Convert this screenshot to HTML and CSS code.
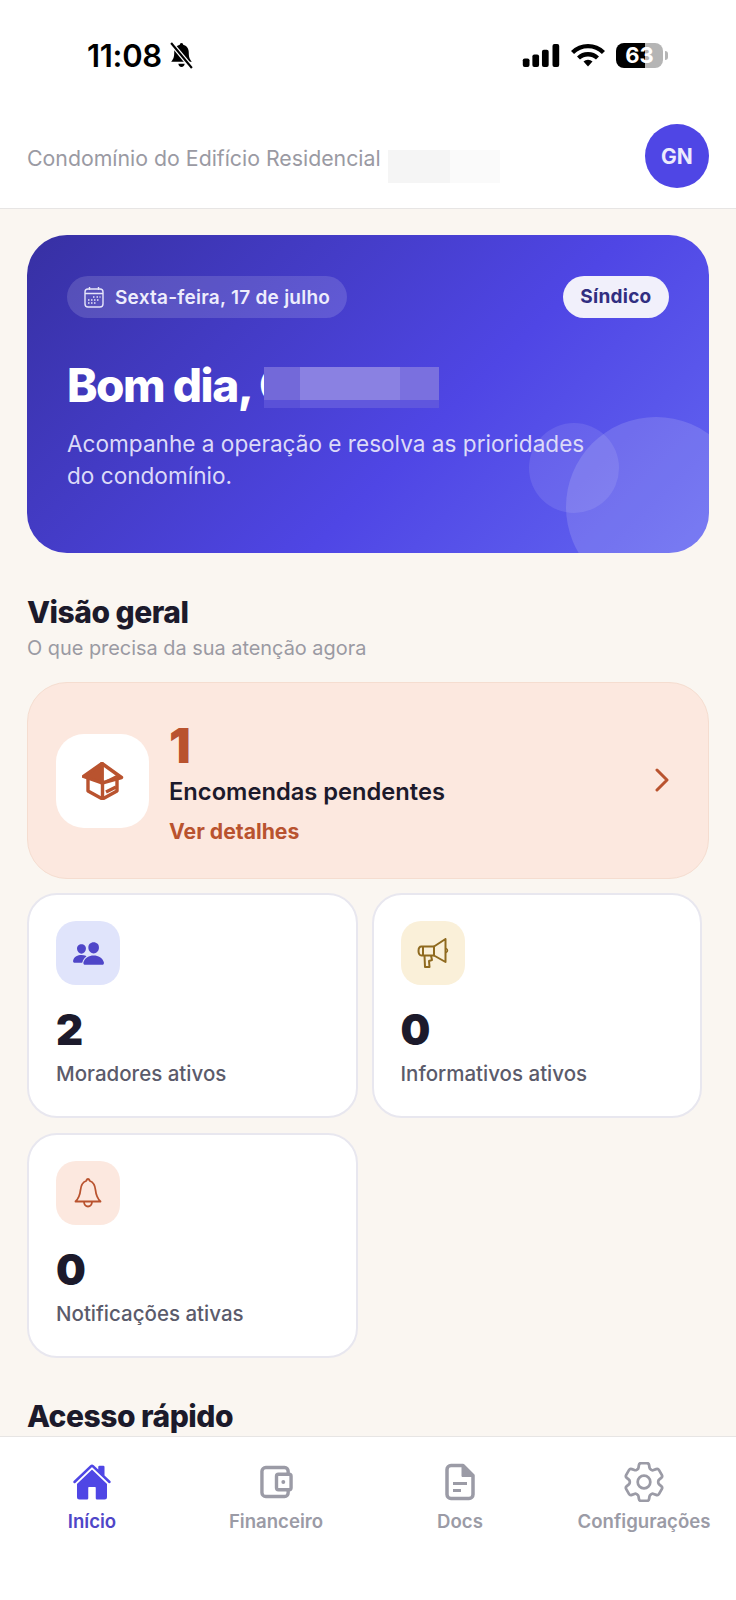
FILE: index.html
```html
<!DOCTYPE html>
<html lang="pt-BR">
<head>
    <meta charset="UTF-8">
    <meta name="viewport" content="width=device-width, initial-scale=1.0">
    <title>Condomínio</title>
    <link rel="stylesheet" href="styles.css">
</head>
<body>

    <!-- Barra de status -->
    <div class="status-bar">
        <div class="status-left">
            <span class="clock">11:08</span>
            <svg class="bell-off" viewBox="0 0 24 26">
                <path d="M12 1c1 0 1.600.8 1.600 1.700C17 3.500 19 6.300 19 10c0 5 1 6.500 3 9H2c2-2.500 3-4 3-9 0-3.700 2-6.500 5.400-7.300C10.400 1.800 11 1 12 1z" fill="#000"/>
                <path d="M9 21h6c0 1.800-1.300 3-3 3s-3-1.200-3-3z" fill="#000"/>
                <path d="M2 1l20 24" stroke="#fff" stroke-width="4.500"/>
                <path d="M2 1l20 24" stroke="#000" stroke-width="2"/>
            </svg>
        </div>
        <div class="status-right">
            <svg class="signal" viewBox="0 0 38 24" fill="#000">
                <rect x="0" y="15" width="7" height="9" rx="2"/>
                <rect x="10" y="11" width="7" height="13" rx="2"/>
                <rect x="20" y="6" width="7" height="18" rx="2"/>
                <rect x="31" y="0" width="7" height="24" rx="2"/>
            </svg>
            <svg class="wifi" viewBox="0 0 34 24" fill="none" stroke="#000" stroke-width="4.400">
                <path d="M1.500 9.500a22 22 0 0 1 31 0"/>
                <path d="M7.500 15a14 14 0 0 1 19 0"/>
                <path d="M12.500 18.500a6.500 6.500 0 0 1 9 0L17 23.500z" fill="#000" stroke="none"/>
            </svg>
            <div class="battery"><span class="battery-level">63</span></div>
            <span class="battery-tip"></span>
        </div>
    </div>

    <!-- Cabecalho -->
    <header class="top-bar">
        <span class="condo-name">Condomínio do Edifício Residencial</span>
        <span class="condo-hidden"><i></i><i></i></span>
        <div class="avatar">GN</div>
    </header>

    <main class="content">

        <section class="hero">
            <span class="circle circle-big"></span>
            <span class="circle circle-small"></span>
            <div class="hero-top">
                <div class="date-pill">
                    <svg class="calendar" viewBox="0 0 20 22" fill="none" stroke="#e6e5fa" stroke-width="1.400">
                        <rect x="1" y="3" width="18" height="18" rx="3"/>
                        <path d="M1 7.500h18M5.500 1v3M14.500 1v3"/>
                        <path d="M9 11h1.500M12.500 11H14M15.500 11h1M4 14h1.500M7 14h1.500M10 14h1.500M13 14h1.500M4 17h1.500M7 17h1.500M10 17h1.500" stroke-width="1.600"/>
                    </svg>
                    Sexta-feira, 17 de julho
                </div>
                <div class="role-pill">Síndico</div>
            </div>
            <h1 class="greeting">Bom dia, G<span class="name-hidden"><i></i><i></i><i></i><i></i></span></h1>
            <p class="hero-text">Acompanhe a operação e resolva as prioridades do condomínio.</p>
        </section>

        <h2 class="section-title overview-title">Visão geral</h2>
        <p class="section-sub">O que precisa da sua atenção agora</p>

        <!-- Destaque de encomendas -->
        <div class="highlight">
            <div class="highlight-icon">
                <svg class="box-icon" viewBox="0 0 42 38" fill="none" stroke="#b9532f" stroke-width="3.400" stroke-linejoin="round">
                    <path d="M20 1.500L1.500 14.500 20 21z" fill="#b9532f"/>
                    <path d="M20 1.500L39.500 15.500 20 21z"/>
                    <path d="M6 17v12l14.500 8L35 29V18"/>
                    <path d="M20.500 21v16M24 30l10-5"/>
                    <path d="M25 19l12-6" stroke-width="2.500"/>
                </svg>
            </div>
            <div class="highlight-text">
                <div class="highlight-number">1</div>
                <div class="highlight-title">Encomendas pendentes</div>
                <div class="highlight-link">Ver detalhes</div>
            </div>
            <svg class="chevron" viewBox="0 0 14 24" fill="none" stroke="#b9532f" stroke-width="3" stroke-linecap="round" stroke-linejoin="round">
                <path d="M2 2l10 10L2 22"/>
            </svg>
        </div>

        <div class="stats">
            <div class="stat-card">
                <div class="stat-icon icon-blue">
                    <svg class="people" viewBox="0 0 512 512" fill="#4f46c8">
                        <path d="M336 256c-20.560 0-40.440-9.180-56-25.840-15.130-16.250-24.370-37.920-26-61-1.740-24.620 5.770-47.260 21.140-63.760S312 80 336 80c23.830 0 45.380 9.060 60.700 25.520 15.470 16.620 23 39.220 21.260 63.630-1.670 23.110-10.900 44.770-26 61C376.440 246.820 356.570 256 336 256z"/>
                        <path d="M467.830 432H204.180a27.710 27.710 0 01-22-10.670 30.220 30.220 0 01-5.260-25.790c8.420-33.810 29.280-61.850 60.320-81.080C264.790 297.400 299.860 288 336 288c36.850 0 71 9 98.710 26.050 31.110 19.130 52 47.330 60.380 81.550a30.270 30.270 0 01-5.320 25.780A27.680 27.680 0 01467.830 432z"/>
                        <path d="M147 260c-35.190 0-66.130-32.720-69-72.930-1.420-20.600 5-39.650 18-53.620 12.860-13.830 31-21.450 51-21.450s38 7.660 50.930 21.570c13.100 14.080 19.500 33.090 18 53.520-2.870 40.200-33.800 72.910-68.930 72.910z"/>
                        <path d="M212.660 291.450c-17.590-8.600-40.420-12.900-65.650-12.900-29.460 0-58.070 7.680-80.570 21.620-25.510 15.830-42.670 38.880-49.600 66.710a27.390 27.390 0 005.360 23.230A25.320 25.320 0 0042.400 400h111a8 8 0 007.870-6.570c.11-.63.25-1.260.41-1.880 8.480-34.060 28.350-62.840 57.710-83.820a8 8 0 00-.63-11.820c-1.570-1.210-3.380-2.400-6.100-4.460z"/>
                    </svg>
                </div>
                <div class="stat-number">2</div>
                <div class="stat-label">Moradores ativos</div>
            </div>
            <div class="stat-card">
                <div class="stat-icon icon-yellow">
                    <svg class="megaphone" viewBox="0 0 32 30" fill="none" stroke="#8f6a1f" stroke-width="2" stroke-linejoin="round">
                        <path d="M17 8.500L28.500 1v23L17 17.500z"/>
                        <path d="M4.500 8.500H17v9H4.500c-1.800 0-3-2-3-4.500s1.200-4.500 3-4.500z"/>
                        <path d="M6 8.500v9M7.500 17.500l.5 11.500h4.500l-.5-6 3-1-1-4.500"/>
                        <path d="M29 10.500c1 .5 1.500 1.200 1.500 2s-.5 1.500-1.500 2" stroke-width="1.500"/>
                    </svg>
                </div>
                <div class="stat-number">0</div>
                <div class="stat-label">Informativos ativos</div>
            </div>
            <div class="stat-card">
                <div class="stat-icon icon-orange">
                    <svg class="bell" viewBox="0 0 28 30" fill="none" stroke="#b9532f" stroke-width="1.800" stroke-linejoin="round">
                        <path d="M14 1c1 0 1.500 1 2 2 4 1.500 5 4.500 5.500 9 .4 4 1.500 8 5 11.500h-25C5 20 6.100 16 6.500 12 7 7.500 8 4.500 12 3c.5-1 1-2 2-2z"/>
                        <path d="M10 23.500c0 3 1.800 5 4 5s4-2 4-5"/>
                    </svg>
                </div>
                <div class="stat-number">0</div>
                <div class="stat-label">Notificações ativas</div>
            </div>
        </div>

        <h2 class="section-title quick-title">Acesso rápido</h2>
    </main>

    <!-- Navegacao inferior -->
    <nav class="tab-bar">
        <a class="tab tab-active">
            <svg class="tab-home" viewBox="0 0 512 512" fill="#4f46e5">
                <path d="M261.560 101.280a8 8 0 00-11.060 0L66.400 277.150a8 8 0 00-2.470 5.790L63.900 448a32 32 0 0032 32H192a16 16 0 0016-16V328a8 8 0 018-8h80a8 8 0 018 8v136a16 16 0 0016 16h96.060a32 32 0 0032-32V282.940a8 8 0 00-2.470-5.790z"/>
                <path d="M490.910 244.150l-74.800-71.560V64a16 16 0 00-16-16h-48a16 16 0 00-16 16v32l-57.920-55.380C272.770 35.140 264.710 32 256 32c-8.680 0-16.720 3.140-22.140 8.630l-212.700 203.500c-6.220 6-7 15.870-1.340 22.370A16 16 0 0043 267.560L250.500 69.280a8 8 0 0111.060 0l207.520 198.280a16 16 0 0022.590-.44c6.140-6.360 5.630-16.860-.76-22.970z"/>
            </svg>
            <span>Início</span>
        </a>
        <a class="tab">
            <svg class="tab-wallet" viewBox="0 0 34 34" fill="none" stroke="#9b9ba6" stroke-width="3.500" stroke-linejoin="round">
                <path d="M29 9V6c0-2.200-1.500-4-3.700-4H6C3.800 2 2 3.800 2 6v22c0 2.200 1.800 4 4 4h19.300c2.200 0 3.700-1.800 3.700-4v-3"/>
                <rect x="17" y="9" width="15" height="16" rx="2"/>
                <circle cx="24" cy="17" r="2" fill="#9b9ba6" stroke="none"/>
            </svg>
            <span>Financeiro</span>
        </a>
        <a class="tab">
            <svg class="tab-doc" viewBox="0 0 30 37" fill="none" stroke="#9b9ba6" stroke-width="3.500" stroke-linejoin="round">
                <path d="M18 2H6C3.800 2 2 3.800 2 6v25c0 2.200 1.800 4 4 4h18c2.200 0 4-1.800 4-4V12z"/>
                <path d="M17 2v11h11z" fill="#9b9ba6" stroke-width="1"/>
                <path d="M8 20h14M8 27h8" stroke-width="3"/>
            </svg>
            <span>Docs</span>
        </a>
        <a class="tab">
            <svg class="tab-gear" viewBox="2.500 2.500 19 19" fill="none" stroke="#9b9ba6" stroke-width="1.300" stroke-linejoin="round">
                <path d="M9.594 3.940c.09-.542.56-.94 1.110-.94h2.593c.55 0 1.020.398 1.110.94l.213 1.281c.063.374.313.686.645.87.074.04.147.083.22.127.324.196.72.257 1.075.124l1.217-.456a1.125 1.125 0 011.370.49l1.296 2.247a1.125 1.125 0 01-.26 1.431l-1.003.827c-.293.24-.438.613-.431.992a6.759 6.759 0 010 .255c-.007.378.138.75.43.99l1.005.828c.424.35.534.954.26 1.430l-1.298 2.247a1.125 1.125 0 01-1.369.491l-1.217-.456c-.355-.133-.75-.072-1.076.124a6.570 6.570 0 01-.22.128c-.331.183-.581.495-.644.869l-.213 1.280c-.09.543-.56.941-1.110.941h-2.594c-.55 0-1.020-.398-1.110-.94l-.213-1.281c-.062-.374-.312-.686-.644-.87a6.520 6.520 0 01-.22-.127c-.325-.196-.72-.257-1.076-.124l-1.217.456a1.125 1.125 0 01-1.369-.49l-1.297-2.247a1.125 1.125 0 01.26-1.431l1.004-.827c.292-.24.437-.613.43-.992a6.932 6.932 0 010-.255c.007-.378-.138-.75-.43-.99l-1.004-.828a1.125 1.125 0 01-.26-1.430l1.297-2.247a1.125 1.125 0 011.370-.491l1.216.456c.356.133.751.072 1.076-.124.072-.044.146-.087.22-.128.332-.183.582-.495.644-.869l.214-1.281z"/>
                <circle cx="12" cy="12" r="3"/>
            </svg>
            <span>Configurações</span>
        </a>
    </nav>

</body>
</html>
```

FILE: styles.css
```css
* {
    box-sizing: border-box;
}
body {
    margin: 0;
    height: 100vh;
    display: flex;
    flex-direction: column;
    overflow: hidden;
    font-family: Inter, 'Liberation Sans', sans-serif;
    background-color: #faf6f1;
    color: #1c1a2b;
}

/* Barra de status */
.status-bar {
    height: 110px;
    flex-shrink: 0;
    display: flex;
    justify-content: space-between;
    align-items: center;
    padding: 0 68px 0 87px;
    background-color: #fff;
}
.status-left, .status-right {
    display: flex;
    align-items: center;
}
.clock {
    font-size: 31px;
    font-weight: 600;
    letter-spacing: -0.3px;
    color: #000;
}
.bell-off {
    width: 25px;
    height: 27px;
    margin-left: 7px;
}
.signal {
    width: 38px;
    height: 23px;
}
.wifi {
    width: 34px;
    height: 24px;
    margin-left: 11px;
}
.battery {
    width: 47px;
    height: 25px;
    margin-left: 11px;
    border-radius: 8px;
    background: linear-gradient(90deg, #000 62%, #b5b5b5 62%);
    display: flex;
    justify-content: center;
    align-items: center;
}
.battery-level {
    font-size: 22px;
    font-weight: 700;
    color: #fff;
}
.battery-tip {
    width: 3px;
    height: 9px;
    margin-left: 2px;
    border-radius: 0 3px 3px 0;
    background-color: #b5b5b5;
}

/* Cabecalho */
.top-bar {
    flex-shrink: 0;
    display: flex;
    align-items: center;
    padding: 14px 27px 20px;
    background-color: #fff;
    border-bottom: 1px solid #e7e5e4;
}
.condo-name {
    margin-top: 4px;
    font-size: 21.3px;
    color: #9a9aa3;
}
.condo-hidden {
    display: flex;
    height: 33px;
    margin: 21px 0 0 7px;
}
.condo-hidden i:first-child {
    width: 62px;
    background-color: #f5f5f5;
}
.condo-hidden i:last-child {
    width: 50px;
    background-color: #fafafa;
}
.avatar {
    width: 64px;
    height: 64px;
    margin-left: auto;
    border-radius: 50%;
    background-color: #4f46e5;
    color: #eceafd;
    font-size: 21px;
    font-weight: 700;
    display: flex;
    justify-content: center;
    align-items: center;
}

/* Contenido */
.content {
    flex: 1;
    min-height: 0;
    overflow: hidden;
    padding: 26px 27px 0;
}
.hero {
    position: relative;
    height: 318px;
    padding: 41px 40px;
    border-radius: 40px;
    overflow: hidden;
    color: #fff;
    background: linear-gradient(135deg, #3730a3 0%, #4f46e5 60%, #6366f1 100%);
}
.circle {
    position: absolute;
    border-radius: 50%;
    background-color: rgba(255, 255, 255, 0.14);
}
.circle-big {
    width: 180px;
    height: 180px;
    right: -37px;
    bottom: -44px;
}
.circle-small {
    width: 90px;
    height: 90px;
    left: 502px;
    top: 188px;
    background-color: rgba(255, 255, 255, 0.1);
}
.hero-top {
    position: relative;
    display: flex;
    justify-content: space-between;
    align-items: center;
}
.date-pill {
    display: flex;
    align-items: center;
    height: 42px;
    padding: 0 17px;
    gap: 11px;
    border-radius: 21px;
    background-color: rgba(255, 255, 255, 0.14);
    font-size: 19px;
    font-weight: 600;
    letter-spacing: 0.25px;
    color: #eeedfc;
}
.calendar {
    width: 20px;
    height: 22px;
}
.role-pill {
    height: 42px;
    padding: 0 17.5px;
    border-radius: 21px;
    background-color: #f1f0fb;
    color: #312e81;
    font-size: 19px;
    font-weight: 700;
    letter-spacing: 0.25px;
    line-height: 42px;
}
.greeting {
    position: relative;
    display: flex;
    margin: 40px 0 0;
    height: 54px;
    align-items: center;
    font-size: 46px;
    font-weight: 800;
    letter-spacing: -1.5px;
    white-space: pre;
}
.name-hidden {
    display: flex;
    width: 175px;
    height: 41px;
    margin: 4px 0 0 -28px;
}
.name-hidden i {
    display: block;
    background: linear-gradient(#8a81e2 0 80%, #6158dd 80%);
}
.name-hidden i:nth-child(1) {
    width: 36px;
    background: linear-gradient(#7369d9 0 80%, #5a51d8 80%);
}
.name-hidden i:nth-child(2), .name-hidden i:nth-child(3) {
    width: 50px;
}
.name-hidden i:nth-child(4) {
    width: 39px;
    background: linear-gradient(#7a70df 0 80%, #5f56de 80%);
}
.hero-text {
    position: relative;
    margin: 16px 0 0;
    max-width: 535px;
    font-size: 22.6px;
    line-height: 32px;
    color: #dcdaf8;
}

/* Secciones */
.section-title {
    margin: 0;
    font-size: 30px;
    line-height: 38px;
    font-weight: 800;
    letter-spacing: -0.5px;
}
.overview-title {
    margin-top: 40px;
}
.quick-title {
    margin-top: 39px;
}
.section-sub {
    margin: 4px 0 0;
    font-size: 19.9px;
    line-height: 26px;
    color: #9a9aa3;
}
.highlight {
    display: flex;
    align-items: center;
    height: 197px;
    margin-top: 21px;
    padding: 0 39px 0 28px;
    border: 1.5px solid #f5ddd0;
    border-radius: 40px;
    background-color: #fce8df;
}
.highlight-icon {
    width: 93px;
    height: 94px;
    flex-shrink: 0;
    border-radius: 28px;
    background-color: #fff;
    display: flex;
    justify-content: center;
    align-items: center;
}
.box-icon {
    width: 42px;
    height: 38px;
}
.highlight-text {
    flex: 1;
    margin-left: 20px;
    padding-top: 2px;
}
.highlight-number {
    font-size: 48px;
    line-height: 52px;
    font-weight: 900;
    color: #b9532f;
}
.highlight-title {
    margin-top: 5px;
    font-size: 23.7px;
    line-height: 30px;
    font-weight: 600;
}
.highlight-link {
    margin-top: 11px;
    font-size: 21.2px;
    line-height: 26px;
    font-weight: 700;
    color: #b9532f;
}
.chevron {
    width: 14px;
    height: 24px;
    margin-top: -2px;
}

/* Tarjetas */
.stats {
    display: flex;
    flex-wrap: wrap;
    gap: 15px 14px;
    margin-top: 14px;
}
.stat-card {
    width: 330.5px;
    height: 225px;
    padding: 26px 27px;
    border: 2px solid #e8e7ef;
    border-radius: 30px;
    background-color: #fff;
}
.stat-icon {
    width: 64px;
    height: 64px;
    border-radius: 20px;
    display: flex;
    justify-content: center;
    align-items: center;
}
.icon-blue {
    background-color: #e0e4fb;
}
.icon-yellow {
    background-color: #faf0d9;
}
.icon-orange {
    background-color: #fce8df;
}
.people {
    width: 33px;
    height: 33px;
}
.megaphone {
    width: 32px;
    height: 30px;
}
.bell {
    width: 28px;
    height: 30px;
}
.stat-number {
    margin-top: 20px;
    font-size: 42px;
    line-height: 50px;
    font-weight: 900;
}
.stat-label {
    margin-top: 6px;
    font-size: 20.5px;
    line-height: 26px;
    font-weight: 500;
    color: #5b5b6b;
}

/* Navegacion inferior */
.tab-bar {
    flex-shrink: 0;
    height: 164px;
    display: flex;
    padding-top: 25px;
    background-color: #fff;
    border-top: 1px solid #e7e5e4;
}
.tab {
    flex: 1;
    display: flex;
    flex-direction: column;
    align-items: center;
    font-size: 18.6px;
    line-height: 24px;
    font-weight: 600;
    color: #9b9ba6;
}
.tab svg {
    height: 40px;
    margin-bottom: 7px;
}
.tab-active {
    color: #4f46c8;
}
.tab-home {
    width: 40px;
}
.tab-wallet {
    width: 33px;
}
.tab-doc {
    width: 30px;
}
.tab-gear {
    width: 40px;
}
```
